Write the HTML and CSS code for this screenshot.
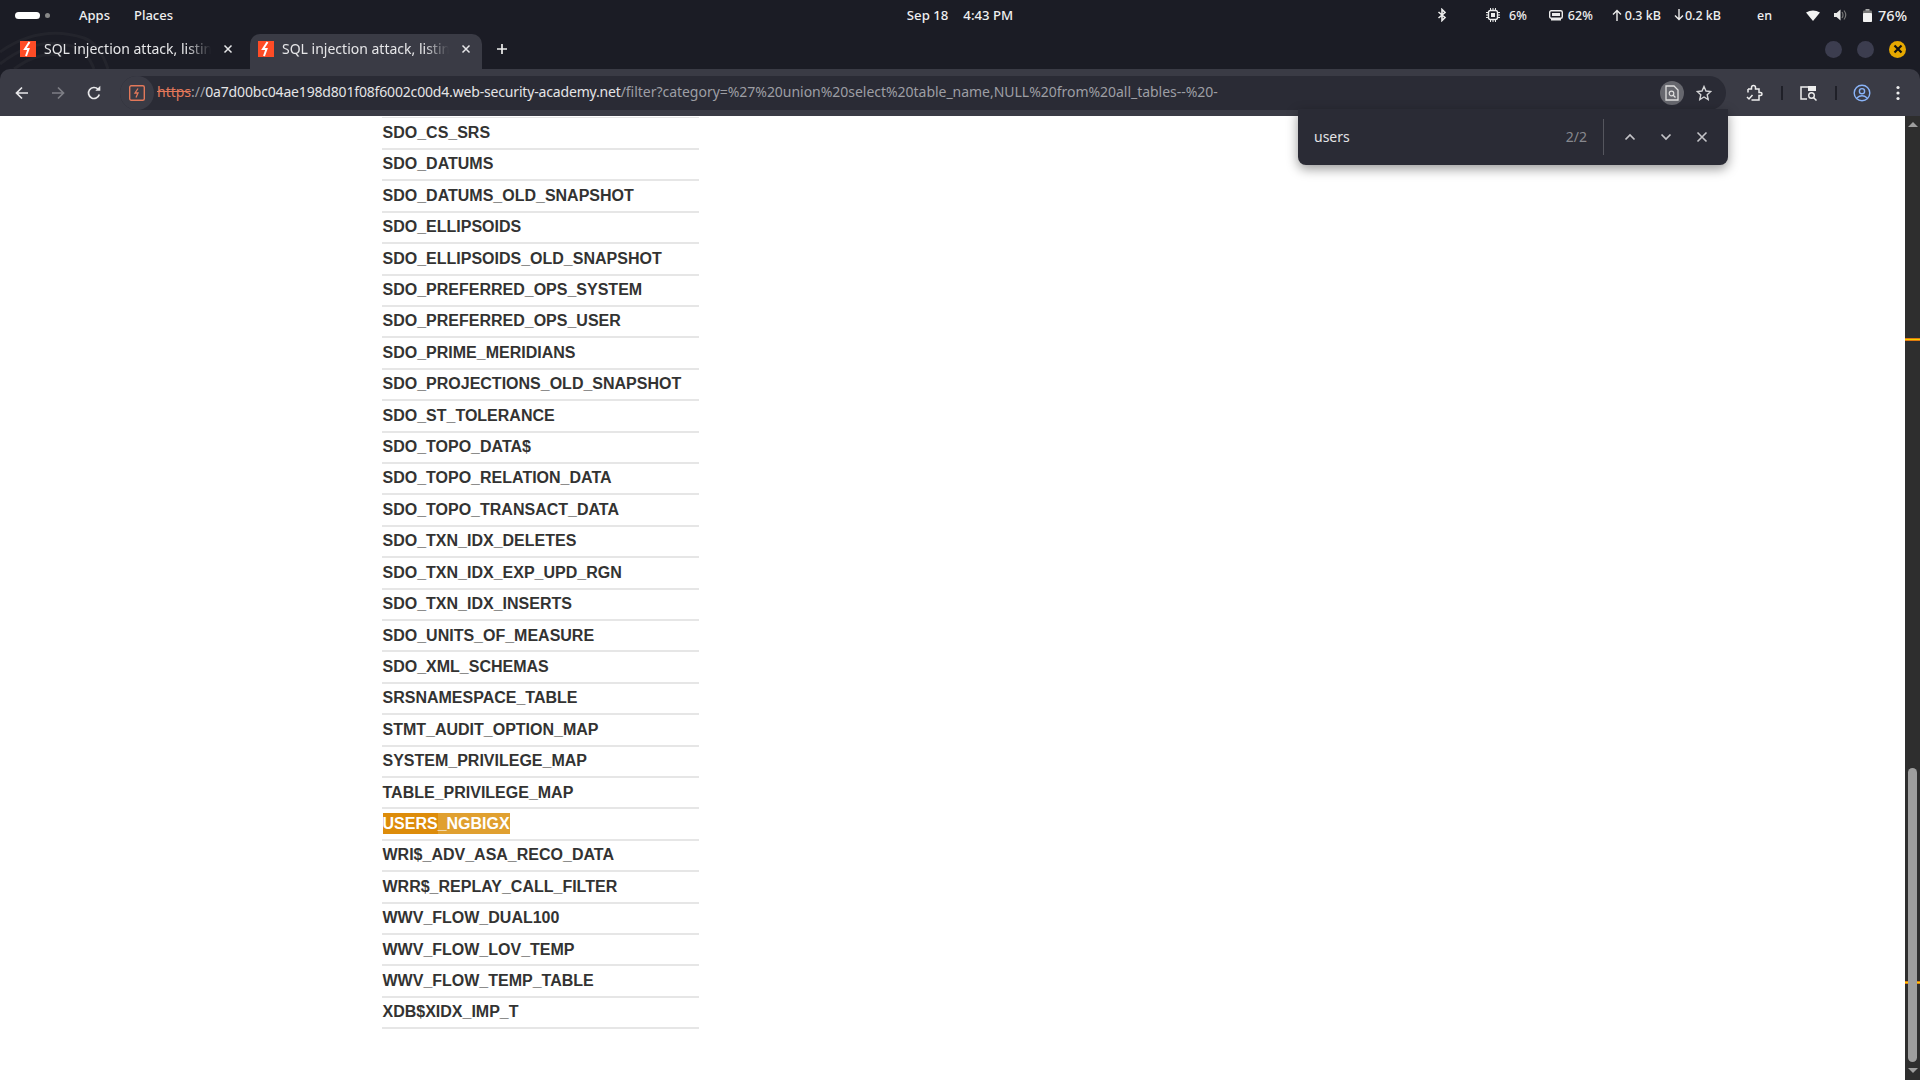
FILE: index.html
```html
<!DOCTYPE html>
<html lang="en">
<head>
<meta charset="utf-8">
<title>SQL injection attack, listing the database contents on Oracle</title>
<link rel="stylesheet" href="styles.css">
</head>
<body>
<header class="topbar">
  <div class="tb-left">
    <div class="workspaces"><span class="ws-pill"></span><span class="ws-dot"></span></div>
    <span class="menu">Apps</span>
    <span class="menu">Places</span>
  </div>
  <div class="tb-center"><span>Sep 18</span><span>4:43 PM</span></div>
  <div class="tb-right">
    <svg class="bt" width="10" height="14" viewBox="0 0 10 14"><path d="M1.500 4 8 9.500 5 12.500V1.500L8 4.500 1.500 10" fill="none" stroke="#ececec" stroke-width="1.600"/></svg>
    <span class="tray cpu"><svg width="14" height="14" viewBox="0 0 14 14"><rect x="2.500" y="2.500" width="9" height="9" rx="2" fill="none" stroke="#ececec" stroke-width="1.400"/><rect x="5" y="5" width="4" height="4" fill="#ececec"/><path d="M4.500 0v2M7 0v2M9.500 0v2M4.500 12v2M7 12v2M9.500 12v2M0 4.500h2M0 7h2M0 9.500h2M12 4.500h2M12 7h2M12 9.500h2" stroke="#ececec"/></svg>6%</span>
    <span class="tray mem"><svg width="14" height="11" viewBox="0 0 14 11"><rect x=".7" y=".7" width="12.600" height="7.600" rx="1.500" fill="none" stroke="#ececec" stroke-width="1.400"/><path d="M3 3h8v3H3zM2 9h10v1.500H2z" fill="#ececec"/></svg>62%</span>
    <span class="tray net"><svg width="10" height="12" viewBox="0 0 10 12"><path d="M5 12V1.500M1 5.500l4-4 4 4" fill="none" stroke="#ececec" stroke-width="1.400"/></svg>0.3 kB</span>
    <span class="tray net2"><svg width="10" height="12" viewBox="0 0 10 12"><path d="M5 0v10.500M1 6.500l4 4 4-4" fill="none" stroke="#ececec" stroke-width="1.400"/></svg>0.2 kB</span>
    <span class="lang">en</span>
    <svg class="wifi" width="14" height="11" viewBox="0 0 14 11"><path d="M0 2.500Q7-1.500 14 2.500L7 11z" fill="#f2f2f2"/></svg>
    <svg class="vol" width="14" height="12" viewBox="0 0 14 12"><path d="M0 4h2.500L6.500 .5v11L2.500 8H0z" fill="#e8e8e8"/><path d="M8 3q2 3 0 6M10 1.500q3.500 4.500 0 9" fill="none" stroke="#777" stroke-width="1.200"/></svg>
    <span class="tray batt"><svg width="9" height="13" viewBox="0 0 9 13"><rect x="2.500" width="4" height="2" fill="#aaa"/><rect y="1.500" width="9" height="11.500" rx="1" fill="#777"/><rect y="4" width="9" height="9" rx="1" fill="#f2f2f2"/></svg>76%</span>
  </div>
</header>

<nav class="tabstrip">
  <svg class="wallpaper" width="130" height="39" viewBox="0 0 130 39"><path d="M0 22Q40-6 84 8Q100 14 108 39M0 34Q36 6 72 16Q88 22 94 39M14 39Q40 20 62 26" fill="none" stroke="#23242c" stroke-width="3"/></svg>
  <div class="tab first">
    <svg class="fav" width="16" height="16" viewBox="0 0 16 16"><rect width="16" height="16" fill="#ff4c26"/><path d="M9.500 1 5 8h3.500L6 15" fill="none" stroke="#fff" stroke-width="2"/></svg>
    <span class="tab-title">SQL injection attack, listing the</span>
    <svg class="tab-x" width="10" height="10" viewBox="0 0 10 10"><path d="M1.500 1.500l7 7M8.500 1.500l-7 7" stroke="#e6e6e8" stroke-width="1.500"/></svg>
  </div>
  <div class="tab active">
    <svg class="fav" width="16" height="16" viewBox="0 0 16 16"><rect width="16" height="16" fill="#ff4c26"/><path d="M9.500 1 5 8h3.500L6 15" fill="none" stroke="#fff" stroke-width="2"/></svg>
    <span class="tab-title">SQL injection attack, listing the</span>
    <svg class="tab-x" width="10" height="10" viewBox="0 0 10 10"><path d="M1.500 1.500l7 7M8.500 1.500l-7 7" stroke="#e6e6e8" stroke-width="1.500"/></svg>
  </div>
  <svg class="newtab" width="12" height="12" viewBox="0 0 12 12"><path d="M6 1v10M1 6h10" stroke="#eee" stroke-width="1.700"/></svg>
  <div class="winbtns"><span class="wb"></span><span class="wb"></span><span class="wb close"><svg width="10" height="10" viewBox="0 0 10 10"><path d="M1.500 1.500l7 7M8.500 1.500l-7 7" stroke="#111" stroke-width="2.200"/></svg></span></div>
</nav>

<div class="toolbar">
  <svg class="nav back" width="16" height="16" viewBox="0 0 16 16"><path d="M14 8H2.500M8 2.500 2.500 8 8 13.500" fill="none" stroke="#e8e8ea" stroke-width="1.700"/></svg>
  <svg class="nav fwd" width="16" height="16" viewBox="0 0 16 16"><path d="M2 8h11.500M8 2.500 13.500 8 8 13.500" fill="none" stroke="#7d7e85" stroke-width="1.700"/></svg>
  <svg class="nav rel" width="16" height="16" viewBox="0 0 16 16"><path d="M13.300 9.500A5.500 5.500 0 1 1 12 4.200" fill="none" stroke="#e8e8ea" stroke-width="1.700"/><path d="M9.300 5.800h5v-5z" fill="#e8e8ea"/></svg>
  <div class="urlbar">
    <span class="chip"><svg width="16" height="16" viewBox="0 0 16 16"><rect x=".7" y=".7" width="14.600" height="14.600" rx="1.500" fill="none" stroke="#e2785a" stroke-width="1.400"/><path d="M9 3.500 6 8h3l-2 4.500" fill="none" stroke="#e2785a" stroke-width="1.300"/></svg></span>
    <span class="url"><s class="scheme">https</s><span class="dim">://</span><span class="host">0a7d00bc04ae198d801f08f6002c00d4.web-security-academy.net</span><span class="dim path">/filter?category=%27%20union%20select%20table_name,NULL%20from%20all_tables--%20-</span></span>
    <span class="reader"><svg width="14" height="16" viewBox="0 0 14 16"><path d="M1 1h8l4 4v10H1z" fill="none" stroke="#dedede" stroke-width="1.300"/><circle cx="6.500" cy="8.500" r="2.300" fill="none" stroke="#dedede" stroke-width="1.200"/><path d="M8.200 10.200 10.500 12.500" stroke="#dedede" stroke-width="1.300"/></svg></span>
    <svg class="star" width="16" height="16" viewBox="0 0 16 16"><path d="M8 1.500 10 6l4.800.5-3.600 3.200 1 4.800L8 12l-4.200 2.500 1-4.800L1.200 6.500 6 6z" fill="none" stroke="#d4d4d6" stroke-width="1.400"/></svg>
  </div>
  <svg class="ext" width="18" height="18" viewBox="0 0 18 18"><path d="M3 5h3.500V3.500a2 2 0 0 1 4 0V5H14v3.500h1.500a1.500 1.500 0 0 1 0 3H14V16H6.500M3 5v3.500M2 13l2 2 3.500-4" fill="none" stroke="#eee" stroke-width="1.500"/></svg>
  <span class="vsep sep-a"></span>
  <svg class="tsearch" width="18" height="16" viewBox="0 0 18 16"><path d="M8 2H1v12h6" fill="none" stroke="#eee" stroke-width="1.500"/><rect x="8" y="1" width="8" height="5" fill="#eee"/><path d="M15 2v3" stroke="#eee" stroke-width="1.500"/><circle cx="11.500" cy="10.500" r="2.800" fill="none" stroke="#eee" stroke-width="1.400"/><path d="M13.500 12.500 16.500 15.500" stroke="#eee" stroke-width="1.500"/></svg>
  <span class="vsep sep-b"></span>
  <svg class="profile" width="18" height="18" viewBox="0 0 18 18"><circle cx="9" cy="9" r="7.800" fill="none" stroke="#8ab4f8" stroke-width="1.400"/><circle cx="9" cy="7.200" r="2.600" fill="none" stroke="#8ab4f8" stroke-width="1.400"/><path d="M3.800 14q5.200-4.500 10.400 0" fill="none" stroke="#8ab4f8" stroke-width="1.400"/></svg>
  <svg class="kebab" width="4" height="16" viewBox="0 0 4 16"><circle cx="2" cy="2.500" r="1.600" fill="#eee"/><circle cx="2" cy="8" r="1.600" fill="#eee"/><circle cx="2" cy="13.500" r="1.600" fill="#eee"/></svg>
</div>

<div class="viewport">
  <main class="page">
    <table class="results">
      <tbody>
        <tr><td>SDO_CS_SRS</td></tr>
        <tr><td>SDO_DATUMS</td></tr>
        <tr><td>SDO_DATUMS_OLD_SNAPSHOT</td></tr>
        <tr><td>SDO_ELLIPSOIDS</td></tr>
        <tr><td>SDO_ELLIPSOIDS_OLD_SNAPSHOT</td></tr>
        <tr><td>SDO_PREFERRED_OPS_SYSTEM</td></tr>
        <tr><td>SDO_PREFERRED_OPS_USER</td></tr>
        <tr><td>SDO_PRIME_MERIDIANS</td></tr>
        <tr><td>SDO_PROJECTIONS_OLD_SNAPSHOT</td></tr>
        <tr><td>SDO_ST_TOLERANCE</td></tr>
        <tr><td>SDO_TOPO_DATA$</td></tr>
        <tr><td>SDO_TOPO_RELATION_DATA</td></tr>
        <tr><td>SDO_TOPO_TRANSACT_DATA</td></tr>
        <tr><td>SDO_TXN_IDX_DELETES</td></tr>
        <tr><td>SDO_TXN_IDX_EXP_UPD_RGN</td></tr>
        <tr><td>SDO_TXN_IDX_INSERTS</td></tr>
        <tr><td>SDO_UNITS_OF_MEASURE</td></tr>
        <tr><td>SDO_XML_SCHEMAS</td></tr>
        <tr><td>SRSNAMESPACE_TABLE</td></tr>
        <tr><td>STMT_AUDIT_OPTION_MAP</td></tr>
        <tr><td>SYSTEM_PRIVILEGE_MAP</td></tr>
        <tr><td>TABLE_PRIVILEGE_MAP</td></tr>
        <tr><td><span class="match"><span class="hit">USERS</span>_NGBIGX</span></td></tr>
        <tr><td>WRI$_ADV_ASA_RECO_DATA</td></tr>
        <tr><td>WRR$_REPLAY_CALL_FILTER</td></tr>
        <tr><td>WWV_FLOW_DUAL100</td></tr>
        <tr><td>WWV_FLOW_LOV_TEMP</td></tr>
        <tr><td>WWV_FLOW_TEMP_TABLE</td></tr>
        <tr><td>XDB$XIDX_IMP_T</td></tr>
      </tbody>
    </table>
  </main>
  <aside class="scrollbar">
    <span class="arrow up"></span>
    <span class="track"><span class="thumb"></span></span>
    <span class="arrow down"></span>
    <span class="mark m-one"></span>
    <span class="mark m-two"></span>
  </aside>
  <div class="findbar">
    <span class="find-q">users</span>
    <span class="find-n">2/2</span>
    <span class="find-sep"></span>
    <svg class="find-i" width="12" height="8" viewBox="0 0 12 8"><path d="M1.500 6.500 6 2l4.500 4.500" fill="none" stroke="#c4c4c8" stroke-width="1.700"/></svg>
    <svg class="find-i" width="12" height="8" viewBox="0 0 12 8"><path d="M1.500 1.500 6 6l4.500-4.500" fill="none" stroke="#c4c4c8" stroke-width="1.700"/></svg>
    <svg class="find-i" width="12" height="12" viewBox="0 0 12 12"><path d="M1.500 1.500l9 9M10.500 1.500l-9 9" stroke="#c4c4c8" stroke-width="1.600"/></svg>
  </div>
</div>
</body>
</html>
```
FILE: styles.css
```css
* { box-sizing: border-box; }
html, body { margin: 0; height: 100%; overflow: hidden; }
body { display: flex; flex-direction: column; background: #1b1c25; font-family: "Noto Sans", sans-serif; color: #e8e8ea; }
svg { display: block; flex: none; }

.topbar { height: 30px; flex: none; display: grid; grid-template-columns: 1fr auto 1fr; align-items: center; background: #1b1c25; font-size: 13px; font-weight: 500; color: #efeff0; }
.tb-left { display: flex; align-items: center; }
.workspaces { display: flex; align-items: center; gap: 5px; margin-left: 15px; width: 64px; }
.ws-pill { width: 25px; height: 7px; border-radius: 4px; background: #fff; }
.ws-dot { width: 5px; height: 5px; border-radius: 50%; background: #888; }
.menu { margin-right: 24px; }
.tb-center { display: flex; gap: 15px; font-size: 13.200px; }
.tb-right { display: flex; align-items: center; justify-content: flex-end; padding-right: 13px; font-size: 12.500px; }
.tray { display: flex; align-items: center; }
.bt { margin-right: 39px; }
.cpu svg { margin-right: 9px; }
.cpu { margin-right: 22px; }
.mem svg { margin-right: 5px; }
.mem { margin-right: 19px; }
.net svg { margin-right: 3px; }
.net { margin-right: 13px; }
.net2 svg { margin-right: 1px; }
.net2 { margin-right: 36px; }
.lang { margin-right: 34px; }
.wifi { margin-right: 14px; }
.vol { margin-right: 15px; }
.batt svg { margin-right: 6px; }
.batt { font-size: 14.500px; }

.tabstrip { height: 39px; flex: none; position: relative; display: flex; align-items: stretch; padding-left: 8px; background: #1b1c25; overflow: hidden; }
.wallpaper { position: absolute; left: 0; top: 0; }
.tab { position: relative; display: flex; align-items: center; height: 35px; margin-top: 4px; padding-bottom: 6px; border-radius: 10px 10px 0 0; font-size: 14px; color: #e6e6e8; }
.tab.first { width: 242px; padding-left: 12px; padding-right: 17px; }
.tab.active { width: 232px; padding-left: 8px; padding-right: 11px; background: #3a3b45; }
.fav { margin-right: 8px; }
.tab-title { flex: 1; white-space: nowrap; overflow: hidden; min-width: 0; -webkit-mask-image: linear-gradient(to right, #000 85%, transparent); mask-image: linear-gradient(to right, #000 85%, transparent); }
.tab-x { margin-left: 12px; }
.newtab { align-self: flex-start; margin: 13px 0 0 14px; }
.winbtns { margin-left: auto; display: flex; align-items: center; gap: 15px; padding-right: 14px; padding-bottom: 1px; }
.wb { width: 17px; height: 17px; border-radius: 50%; background: #3c3d4f; display: flex; align-items: center; justify-content: center; }
.wb.close { background: #e6a800; }

.toolbar { height: 47px; flex: none; display: flex; align-items: center; padding-left: 14px; background: #3a3b45; border-radius: 10px 10px 0 0; }
.nav.fwd { margin-left: 20px; }
.nav.rel { margin-left: 20px; }
.urlbar { width: 1606px; height: 34px; margin-left: 18px; display: flex; align-items: center; border-radius: 17px; background: #2a2b35; padding: 0 14px 0 0; }
.chip { width: 34px; height: 34px; border-radius: 50%; background: #3a3b45; display: flex; align-items: center; justify-content: center; flex: none; }
.url { flex: 1; margin-left: 3px; white-space: nowrap; overflow: hidden; font-size: 14px; color: #e4e4e6; margin-top: -2px; }
.scheme { color: #e2785a; }
.dim { color: #9d9ea4; }
.host { letter-spacing: -.17px; }
.path { letter-spacing: -.03px; }
.reader { width: 24px; height: 24px; border-radius: 50%; background: #66676e; display: flex; align-items: center; justify-content: center; flex: none; margin-right: 12px; }
.ext { margin-left: 19px; }
.vsep { width: 2px; height: 14px; background: #1f2028; flex: none; }
.sep-a { margin: 0 17px 0 18px; }
.sep-b { margin: 0 16px 0 17px; }
.kebab { margin-left: 25px; }

.viewport { flex: 1; min-height: 0; position: relative; display: flex; background: #fff; }
.page { flex: 1; min-width: 0; padding: 1px 0 0 382px; }
.results { width: 317px; border-collapse: collapse; border-top: 1px solid #e6e6e6; font-family: "Liberation Sans", Arial, sans-serif; font-size: 16px; font-weight: 700; color: #333332; }
.results tr { height: 31.410px; }
.results td { padding: 0 0 .4px .5px; border-bottom: 2px solid #e6e6e6; }
.match { padding: 2px 0; background: #e0a030; color: #fff; }
.hit { padding: 2px 0; background: #dd8c0a; }

.scrollbar { width: 15px; flex: none; position: relative; display: flex; flex-direction: column; align-items: center; background: #2e2e2e; }
.arrow { width: 0; height: 0; border-left: 5px solid transparent; border-right: 5px solid transparent; flex: none; }
.arrow.up { border-bottom: 5px solid #9e9e9e; margin-top: 6px; }
.arrow.down { border-top: 5px solid #9e9e9e; margin-bottom: 7px; }
.track { flex: 1; width: 100%; padding: 641px 3px 6px; display: flex; position: relative; z-index: 1; }
.thumb { flex: 1; background: #9e9e9e; border-radius: 5px; }
.mark { position: absolute; left: 0; width: 100%; height: 3px; background: #f5d000; border-top: 1px solid #e07a10; border-bottom: 1px solid #e07a10; }
.m-one { top: 222px; }
.m-two { top: 865px; }

.findbar { position: absolute; left: 1298px; top: -7px; width: 430px; height: 56px; display: flex; align-items: center; padding: 0 0 0 16px; background: #2a2b35; border-radius: 0 0 8px 8px; box-shadow: 0 4px 12px rgba(0,0,0,.4); font-size: 14px; z-index: 2; }
.find-q { flex: 1; color: #e4e4e6; margin-top: -1px; }
.find-n { color: #87888e; margin-right: 16px; margin-top: -1px; }
.find-sep { width: 1px; height: 36px; background: #55565e; margin-right: 20px; }
.find-i { margin-right: 24px; }
.find-i:last-child { margin-right: 20px; }
```
